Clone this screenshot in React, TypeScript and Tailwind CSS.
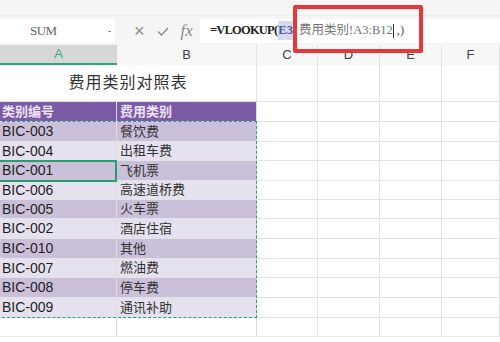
import React from 'react';

const cols = [
  { name: 'A', w: 117 },
  { name: 'B', w: 140 },
  { name: 'C', w: 61 },
  { name: 'D', w: 62 },
  { name: 'E', w: 62 },
  { name: 'F', w: 58 },
];

const rowHeights = [20, 20, 19, 20, 19, 19, 20, 20, 19, 20, 20, 19];

const data = [
  ['BIC-003', '餐饮费'],
  ['BIC-004', '出租车费'],
  ['BIC-001', '飞机票'],
  ['BIC-006', '高速道桥费'],
  ['BIC-005', '火车票'],
  ['BIC-002', '酒店住宿'],
  ['BIC-010', '其他'],
  ['BIC-007', '燃油费'],
  ['BIC-008', '停车费'],
  ['BIC-009', '通讯补助'],
];

const sans = { fontFamily: '"Liberation Sans", "Noto Sans CJK SC", sans-serif' };
const serif = { fontFamily: '"Liberation Serif", "Noto Sans CJK SC", serif' };

const App = () => {
  return (
    <div className="relative w-[500px] h-[342px] overflow-hidden bg-white" style={sans}>
      {/* 상단 툴바 */}
      <div className="h-[16px] bg-[#f5f5f5] border-b border-[#ececec]" />

      {/* 수식 바 */}
      <div className="flex items-center h-[29px] bg-[#f5f5f5]">
        <div className="flex items-center w-[115px] h-[24px] bg-white pl-[30px] pr-[4px]">
          <span className="flex-1 text-[13px] text-[#666] tracking-[-0.5px]" style={serif}>SUM</span>
          <span className="text-[10px] text-[#777]">-</span>
        </div>
        <div className="flex items-center w-[85px] pl-[19px] gap-[11px] text-[#8a8a8a]">
          <span className="text-[18px] leading-none">×</span>
          <svg width="14" height="12" viewBox="0 0 14 12">
            <path d="M2 6.5 L5.5 10 L12 3" fill="none" stroke="#8a8a8a" strokeWidth="1.4" />
          </svg>
          <span className="text-[17px] italic leading-none" style={serif}>fx</span>
        </div>
        <div className="flex items-center flex-1 h-[24px] bg-white pl-[10px] text-[12.5px] text-[#222]" style={serif}>
          <span className="font-bold tracking-[-0.8px]">=VLOOKUP(</span>
          <span className="bg-[#d6d9f0] text-[#4a5aa8] font-bold ml-[1px]">E3</span>
          <span className="font-bold">,</span>
          <span className="text-[#777] ml-[3px]">费用类别!A3:B12</span>
          <span className="w-[1px] h-[14px] bg-[#333]" />
          <span className="text-[#555] ml-[3px]">,)</span>
        </div>
      </div>

      {/* 열 머리글 */}
      <div className="flex h-[20px] bg-[#f7f7f7]">
        {cols.map((c, i) => (
          <div
            key={c.name}
            style={{ width: c.w }}
            className={
              i === 0
                ? 'flex items-center justify-center bg-[#d7d7d7] border-b-2 border-[#2fa57a] text-[13px] text-[#3aa57c]'
                : 'flex items-center justify-center border-r border-[#e2e2e2] text-[13px] text-[#444]'
            }
          >
            {c.name}
          </div>
        ))}
      </div>

      {/* 제목 행 */}
      <div className="flex h-[37px] border-b border-[#e3e3e3]">
        <div className="w-[257px] flex items-center justify-center border-r border-[#e3e3e3] text-[16px] text-[#333] tracking-[1px]">
          费用类别对照表
        </div>
        {cols.slice(2).map((c) => (
          <div key={c.name} style={{ width: c.w }} className="border-r border-[#e3e3e3]" />
        ))}
      </div>

      {/* 표 */}
      {rowHeights.map((h, r) => {
        const isHead = r === 0;
        const item = r >= 1 && r <= 10 ? data[r - 1] : null;
        const fill = isHead
          ? 'bg-[#7b5ba6]'
          : item
          ? r % 2 === 1
            ? 'bg-[#cbc0da]'
            : 'bg-[#e6e1ee]'
          : '';
        return (
          <div key={r} className="flex border-b border-[#e3e3e3]" style={{ height: h }}>
            <div className={`w-[117px] flex items-center pl-[2px] border-r border-[#dcdcdc] ${fill}`}>
              {isHead ? (
                <span className="text-[13px] font-bold text-[#ece4f7]">类别编号</span>
              ) : item ? (
                <span className="text-[14px] text-[#1e1e1e]">{item[0]}</span>
              ) : null}
            </div>
            <div className={`w-[140px] flex items-center pl-[3px] border-r border-[#dcdcdc] ${fill}`}>
              {isHead ? (
                <span className="text-[13px] font-bold text-[#ece4f7]">费用类别</span>
              ) : item ? (
                <span className="text-[13px] text-[#333]">{item[1]}</span>
              ) : null}
            </div>
            {cols.slice(2).map((c) => (
              <div key={c.name} style={{ width: c.w }} className="border-r border-[#e3e3e3]" />
            ))}
          </div>
        );
      })}

      {/* 복사 범위 점선 */}
      <div className="absolute left-[-3px] top-[121px] w-[260px] h-[197px] border-[1.5px] border-dashed border-[#2a9d8f] pointer-events-none" />

      {/* 선택 셀 */}
      <div className="absolute left-[-2px] top-[160px] w-[119px] h-[22px] border-2 border-[#23a06e] pointer-events-none" />

      {/* 빨간 강조 상자 */}
      <div className="absolute left-[293px] top-[5px] w-[130px] h-[48px] border-[4px] border-[#e8363a] rounded-[2px] pointer-events-none" />
    </div>
  );
};

export default App;
